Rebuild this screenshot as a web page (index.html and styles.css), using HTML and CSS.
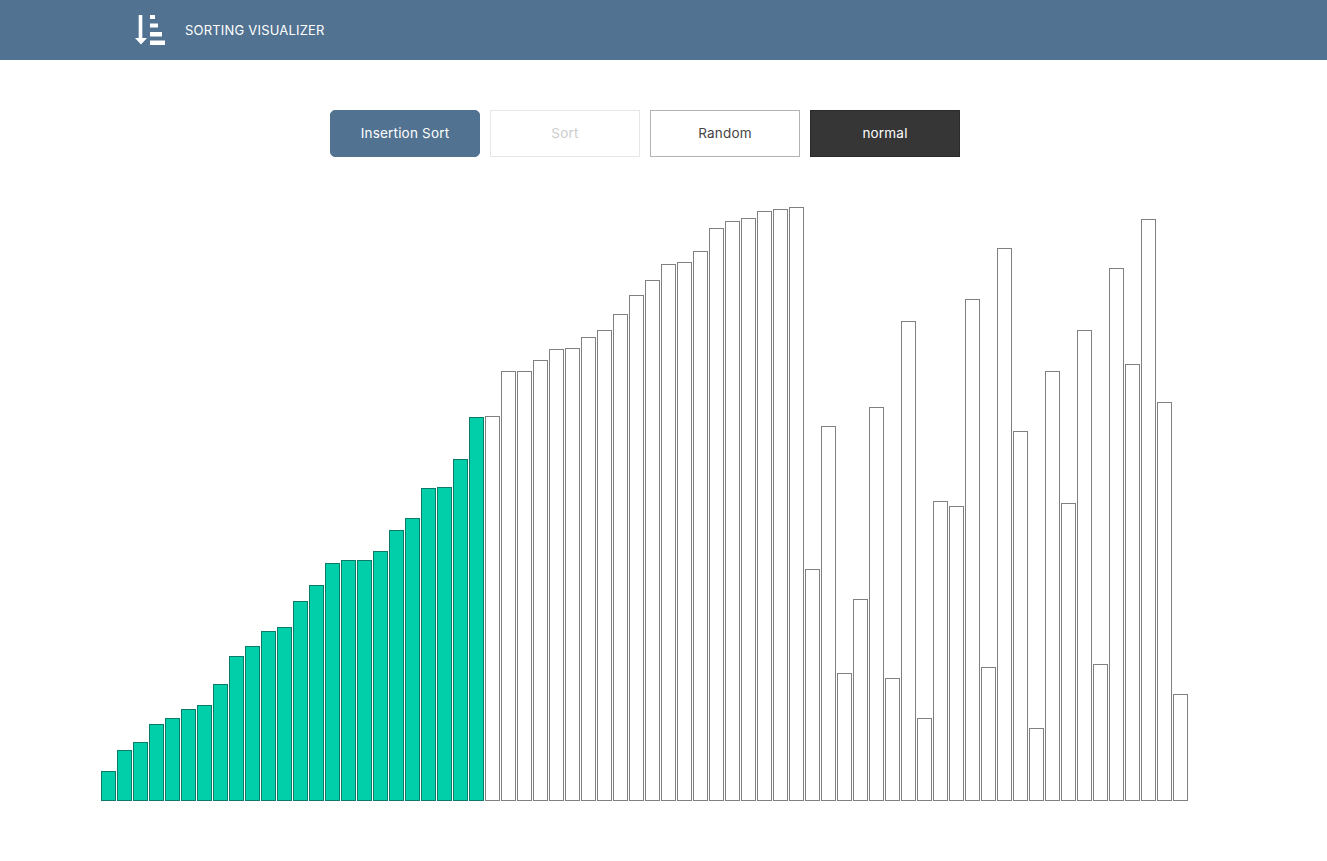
FILE: index.html
```html
<!DOCTYPE html>
<html>
<head>
  <title>Sorting Visualizer</title>
  <link rel="stylesheet" href="styles.css">
</head>
<body>
  <nav class="navbar">
    <svg class="logo" width="30" height="30" viewBox="0 0 30 30" fill="#fff">
      <path d="M3.700 0h3.600v23H12l-6 6.500L0 23h3.700z"/>
      <rect x="15" y="0" width="5" height="4"/>
      <rect x="15" y="8.500" width="8" height="4"/>
      <rect x="15" y="17" width="12" height="4.500"/>
      <rect x="15" y="25.500" width="15" height="4.500"/>
    </svg>
    <span class="brand">SORTING VISUALIZER</span>
  </nav>

  <main class="content">
    <div class="controls">
      <button class="btn btn-algo">Insertion Sort</button>
      <button class="btn btn-sort" disabled>Sort</button>
      <button class="btn btn-random">Random</button>
      <button class="btn btn-speed">normal</button>
    </div>
    <div class="chart" id="chart"></div>
  </main>

  <script src="script.js"></script>
</body>
</html>
```

FILE: styles.css
```css
body {
  margin: 0;
  padding: 0;
  font-family: 'Inter', 'Open Sans', sans-serif;
  background: #fff;
}
.navbar {
  height: 60px;
  background: #517290;
  display: flex;
  align-items: center;
  padding-left: 135px;
}
.logo {
  margin-right: 20px;
}
.brand {
  color: #fff;
  font-size: 13px;
  letter-spacing: 0.2px;
}
.content {
  width: 1290px;
}
.controls {
  display: flex;
  justify-content: center;
  gap: 10px;
  margin-top: 50px;
}
.btn {
  width: 150px;
  height: 47px;
  padding: 0 0 2px;
  font-family: inherit;
  font-size: 13.5px;
  letter-spacing: 0.2px;
  border: 1px solid #b3b3b3;
  background: #fff;
  color: #444;
}
.btn-algo {
  background: #517290;
  border-color: #517290;
  border-radius: 5px;
  color: #fff;
}
.btn-sort {
  border-color: #e6e6e6;
  color: #ccc;
}
.btn-speed {
  background: #363636;
  border-color: #2a2a2a;
  color: #fff;
}
.chart {
  height: 594px;
  margin-top: 50px;
  display: flex;
  justify-content: center;
  align-items: flex-end;
}
.bar {
  width: 15px;
  margin-right: 1px;
  box-sizing: border-box;
  background: #fff;
  border: 1px solid #808080;
}
.bar.sorted {
  background: #00cfaa;
  border-color: #0b7a68;
}
```

FILE: script.js
```js
const baseline = 801;
const sortedCount = 24;
const tops = [
  771, 750, 742, 724, 718, 709, 705, 684, 656, 646, 631, 627, 601, 585, 563, 560, 560,
  551, 530, 518, 488, 487, 459, 417, 416, 371, 371, 360, 349, 348, 337, 330, 314, 295,
  280, 264, 262, 251, 228, 221, 218, 211, 209, 207, 569, 426, 673, 599, 407, 678, 321,
  718, 501, 506, 299, 667, 248, 431, 728, 371, 503, 330, 664, 268, 364, 219, 402, 694
];

const chart = document.getElementById("chart");
tops.forEach((top, i) => {
  const bar = document.createElement("div");
  bar.className = i < sortedCount ? "bar sorted" : "bar";
  bar.style.height = (baseline - top) + "px";
  chart.appendChild(bar);
});
```
